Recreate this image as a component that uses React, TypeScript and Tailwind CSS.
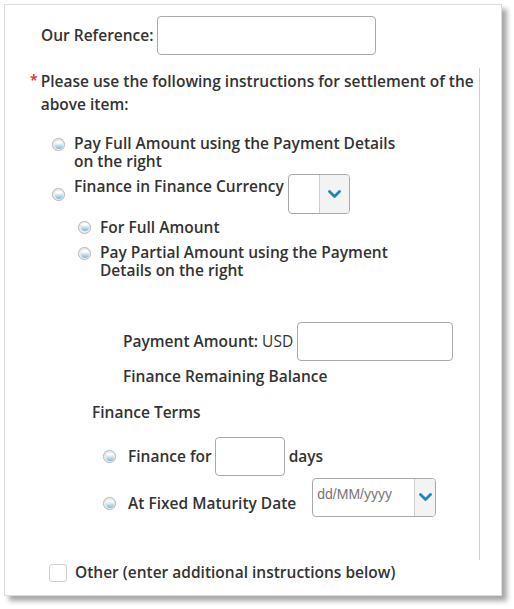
import React from "react";

const font = { fontFamily: '"Open Sans", "Liberation Sans", sans-serif' };

function Radio({ className = "" }: { className?: string }) {
  return (
    <span
      className={`flex h-[13px] w-[13px] shrink-0 items-center justify-center rounded-full border border-[#bdbdbd] bg-[#ececec] shadow-[0_0_1px_rgba(0,0,0,0.15)] ${className}`}
    >
      <span className="h-[8px] w-[8px] rounded-full bg-gradient-to-b from-[#ffffff] from-20% to-[#7fb6d6]" />
    </span>
  );
}

function Chevron() {
  return (
    <svg width="13" height="9" viewBox="0 0 13 9">
      <path d="M1.5 1.5 L6.5 6.5 L11.5 1.5" fill="none" stroke="#1a86c8" strokeWidth="2.8" strokeLinecap="round" strokeLinejoin="round" />
    </svg>
  );
}

export default function App() {
  return (
    <div className="h-[609px] w-[514px] bg-white pl-[4px] pt-[4px]" style={font}>
      <div className="h-[592px] w-[498px] border border-[#dcdcdc] bg-white text-[15.5px] font-semibold text-[#333] shadow-[5px_5px_5px_rgba(0,0,0,0.35)]">
        <div className="flex items-center pl-[36px] pt-[11px]">
          <span className="mr-[4px]">Our Reference:</span>
          <span className="h-[39px] w-[219px] rounded-[4px] border border-[#a9a9a9]" />
        </div>
        <div className="mt-[13px] h-[492px] w-[475px] border-r border-[#cfcfcf] pt-[2px]">
          <div className="flex pl-[25px] leading-[23px]">
            <span className="mr-[3px] mt-[-2px] text-[14px] text-[#e3262d]">*</span>
            <span>Please use the following instructions for settlement of the above item:</span>
          </div>
          <div className="mt-[18px] flex items-start pl-[47px] leading-[18px]">
            <Radio className="mr-[9px] mt-[4px]" />
            <span className="w-[340px]">Pay Full Amount using the Payment Details on the right</span>
          </div>
          <div className="mt-[4px] flex items-start pl-[47px]">
            <Radio className="mr-[9px] mt-[14px]" />
            <span className="mr-[4px] mt-[3px] leading-[18px]">Finance in Finance Currency</span>
            <span className="flex h-[40px] w-[62px] overflow-hidden rounded-[4px] border border-[#a9a9a9]">
              <span className="flex-1" />
              <span className="flex w-[30px] items-center justify-center border-l border-[#cfcfcf] bg-[#f3f3f3]">
                <Chevron />
              </span>
            </span>
          </div>
          <div className="mt-[4px] flex items-center pl-[73px] leading-[18px]">
            <Radio className="mr-[9px]" />
            <span>For Full Amount</span>
          </div>
          <div className="mt-[7px] flex items-start pl-[73px] leading-[18px]">
            <Radio className="mr-[9px] mt-[4px]" />
            <span className="w-[300px]">Pay Partial Amount using the Payment Details on the right</span>
          </div>
          <div className="mt-[43px] flex items-center pl-[118px]">
            <span>Payment Amount:</span>
            <span className="ml-[4px] mr-[4px] font-normal">USD</span>
            <span className="h-[39px] w-[156px] rounded-[4px] border border-[#a9a9a9]" />
          </div>
          <div className="mt-[6px] pl-[118px] leading-[18px]">Finance Remaining Balance</div>
          <div className="mt-[18px] pl-[87px] leading-[18px]">Finance Terms</div>
          <div className="mt-[16px] flex items-center pl-[98px]">
            <Radio className="mr-[12px]" />
            <span className="mr-[3px]">Finance for</span>
            <span className="h-[39px] w-[70px] rounded-[4px] border border-[#a9a9a9]" />
            <span className="ml-[4px]">days</span>
          </div>
          <div className="mt-[2px] flex items-start pl-[98px]">
            <Radio className="mr-[12px] mt-[19px]" />
            <span className="mr-[16px] mt-[16px] leading-[18px]">At Fixed Maturity Date</span>
            <span className="flex h-[39px] w-[124px] overflow-hidden rounded-[4px] border border-[#a9a9a9]">
              <span
                className="flex-1 pl-[4px] pt-[6px] text-[14px] font-normal leading-[18px] text-[#777]"
                style={{ fontFamily: '"Liberation Sans", Arial, sans-serif' }}
              >
                dd/MM/yyyy
              </span>
              <span className="flex w-[21px] items-center justify-center border-l border-[#cfcfcf] bg-[#f3f3f3]">
                <Chevron />
              </span>
            </span>
          </div>
        </div>
        <div className="mt-[1px] flex items-center pl-[44px]">
          <span className="mr-[8px] h-[18px] w-[18px] rounded-[3px] border border-[#cfcfcf]" />
          <span>Other (enter additional instructions below)</span>
        </div>
      </div>
    </div>
  );
}
